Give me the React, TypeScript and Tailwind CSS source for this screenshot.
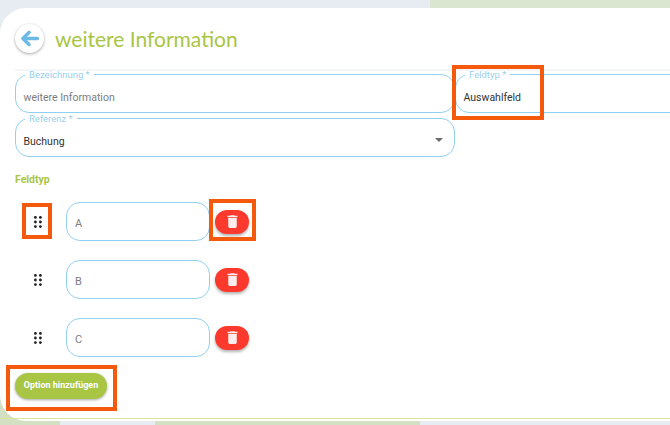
import { ReactNode } from "react";

function OutlinedField({ label, value, muted, right }: { label: string; value: string; muted?: boolean; right?: ReactNode }) {
  return (
    <fieldset className="w-[440px] h-[44px] shrink-0 border border-[#92d0f2] rounded-[14px] pl-[7.5px] pr-3 flex items-center justify-between">
      <legend className="ml-[1.5px] px-[4px] text-[9.5px] leading-[11px] h-[10px] text-[#9ccfee]">{label} *</legend>
      <span className={`text-[10.5px] leading-none mt-[5px] ${muted ? "text-[#7d7d7d]" : "text-[#333333]"}`}>{value}</span>
      {right}
    </fieldset>
  );
}

function OptionRow({ value }: { value: string }) {
  return (
    <div className="flex items-center h-[39px]">
      <div className="w-[51px] flex justify-center pr-[5px]">
        <svg width="8" height="12" viewBox="0 0 8 12" fill="#1f1f1f">
          <circle cx="1.4" cy="1.4" r="1.4" />
          <circle cx="6.4" cy="1.4" r="1.4" />
          <circle cx="1.4" cy="6" r="1.4" />
          <circle cx="6.4" cy="6" r="1.4" />
          <circle cx="1.4" cy="10.6" r="1.4" />
          <circle cx="6.4" cy="10.6" r="1.4" />
        </svg>
      </div>
      <div className="w-[144px] h-[39px] border border-[#92d0f2] rounded-[14px] pl-2 flex items-center text-[11px] pt-[5px] text-[#7d7d7d]">{value}</div>
      <button className="ml-[5px] w-[34px] h-[24px] rounded-full bg-[#fb3a2d] flex items-center justify-center shadow-[0_2px_3px_rgba(0,0,0,0.3)]">
        <svg width="17" height="17" viewBox="0 0 24 24" fill="#fdeeee">
          <path d="M6 19c0 1.1.9 2 2 2h8c1.1 0 2-.9 2-2V7H6v12zM19 4h-3.5l-1-1h-5l-1 1H5v2h14V4z" />
        </svg>
      </button>
    </div>
  );
}

export default function App() {
  return (
    <div className="relative w-[670px] h-[425px] overflow-hidden bg-[linear-gradient(180deg,#e6ecf1_50%,#d3e0c3_50%)] font-['Roboto',sans-serif]">
      <div className="flex justify-end h-2">
        <div className="w-[240px] bg-[#dbe6d0]" />
      </div>
      <div className="h-[413px] bg-white rounded-tl-[26px] rounded-bl-[26px] pl-[15px] overflow-hidden">
        <div className="flex items-center h-[61px]">
          <button className="w-[29px] h-[29px] rounded-full bg-white flex items-center justify-center shadow-[0_1px_3px_rgba(0,0,0,0.35)]">
            <svg width="21" height="21" viewBox="0 0 24 24" fill="none" stroke="#6cb9e6" strokeWidth="4" strokeLinecap="round" strokeLinejoin="round">
              <path d="M21 12H5" />
              <path d="M11.5 5L4.5 12l7 7" />
            </svg>
          </button>
          <h1 className="ml-[11px] text-[21px] leading-none text-[#a9c544] font-['Lato',sans-serif]">weitere Information</h1>
        </div>
        <div className="flex shadow-[inset_0_2px_0_#f3f6f9]">
          <OutlinedField label="Bezeichnung" value="weitere Information" muted />
          <OutlinedField label="Feldtyp" value="Auswahlfeld" />
        </div>
        <div className="flex">
          <OutlinedField
            label="Referenz"
            value="Buchung"
            right={
              <svg width="8" height="4" viewBox="0 0 8 4" fill="#6b6b6b" className="mr-[-1px]">
                <path d="M0 0h8L4 4z" />
              </svg>
            }
          />
        </div>
        <h2 className="mt-[17px] text-[10.5px] leading-[12px] font-bold text-[#a9c544]">Feldtyp</h2>
        <div className="mt-[16px] flex flex-col gap-[19px]">
          <OptionRow value="A" />
          <OptionRow value="B" />
          <OptionRow value="C" />
        </div>
        <button className="mt-[16px] w-[92px] h-[26px] rounded-full bg-[#a9c544] text-white text-[9px] font-bold shadow-[0_1px_3px_rgba(0,0,0,0.35)]">Option hinzufügen</button>
      </div>
      <div className="flex h-1">
        <div className="w-[60px] bg-[#d3e0c3]" />
        <div className="w-[95px] bg-[#e6ecf1]" />
        <div className="w-[265px] bg-[#d3e0c3]" />
        <div className="flex-1 bg-[#e6ecf1]" />
      </div>
      <div className="absolute left-0 right-0 bottom-[6px] h-[1.5px] bg-[#d9e59b]" />
      <div className="absolute left-[452px] top-[65px] w-[92px] h-[55px] border-[4px] border-[#f4590c]" />
      <div className="absolute left-[22px] top-[203px] w-[30px] h-[36px] border-[4px] border-[#f4590c]" />
      <div className="absolute left-[209px] top-[199px] w-[47px] h-[42px] border-[4px] border-[#f4590c]" />
      <div className="absolute left-[6px] top-[365px] w-[111px] h-[46px] border-[4px] border-[#f4590c]" />
    </div>
  );
}
